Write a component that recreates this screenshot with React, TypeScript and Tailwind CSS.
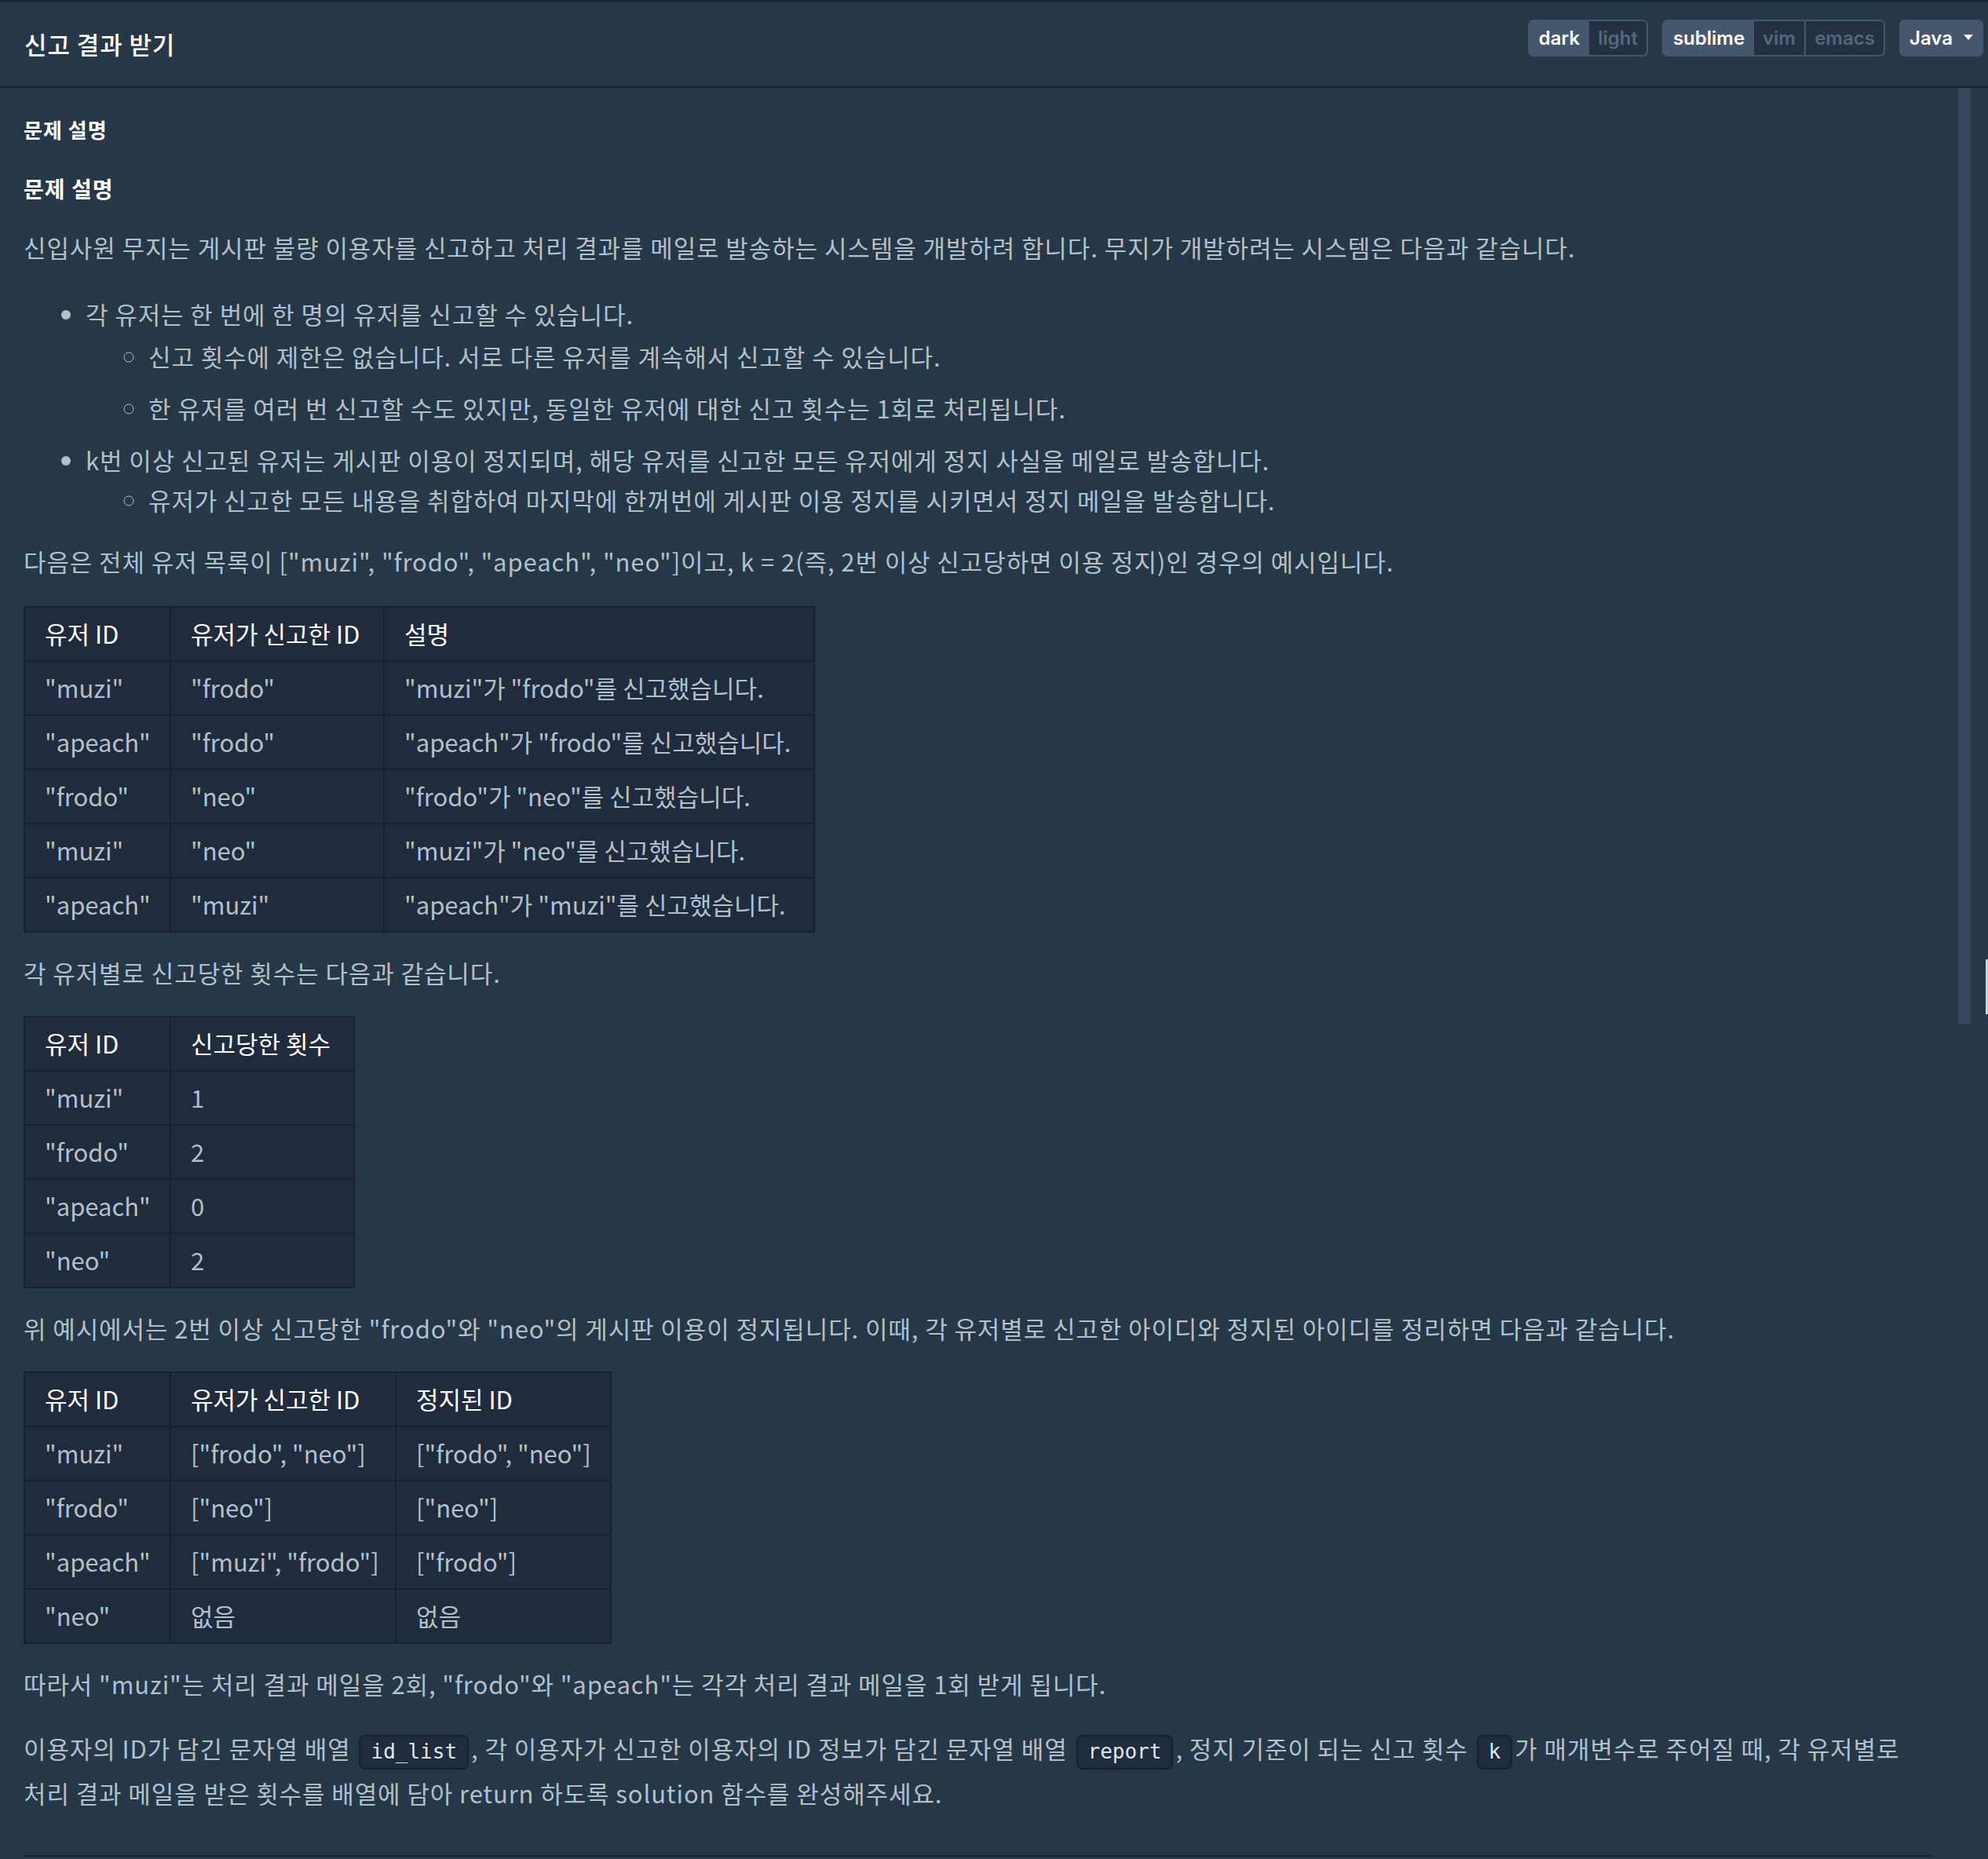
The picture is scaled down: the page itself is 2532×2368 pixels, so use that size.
import React from 'react';

const body = "font-['Noto_Sans_CJK_KR',sans-serif]";

type TableProps = {
  widths: string[];
  head: string[];
  rows: string[][];
  className?: string;
};

const DataTable: React.FC<TableProps> = ({ widths, head, rows, className }) => (
  <table className={`table-fixed border-collapse bg-[#202b3d] tracking-normal ${className ?? ''}`}>
    <thead>
      <tr>
        {head.map((h, i) => (
          <th
            key={i}
            className={`${widths[i]} h-[69px] border-2 border-[#172130] px-[25px] text-left font-normal text-white`}
          >
            {h}
          </th>
        ))}
      </tr>
    </thead>
    <tbody>
      {rows.map((row, r) => (
        <tr key={r}>
          {row.map((cell, c) => (
            <td key={c} className="h-[69px] border-2 border-[#172130] px-[25px] text-[#b2c0cc] whitespace-nowrap">
              {cell}
            </td>
          ))}
        </tr>
      ))}
    </tbody>
  </table>
);

const Code: React.FC<{ children: React.ReactNode }> = ({ children }) => (
  <code className="mx-[3px] inline-flex h-[44px] items-center rounded-[8px] border-2 border-[#172130] bg-[#202b3d] px-[13px] align-middle font-['DejaVu_Sans_Mono',monospace] text-[26px] tracking-normal text-[#dfe6ed]">
    {children}
  </code>
);

const Segment: React.FC<{ label: string; active?: boolean; className?: string }> = ({ label, active, className }) => (
  <div
    className={`flex h-full items-center justify-center ${
      active ? 'bg-[#44576c] text-white' : 'bg-[#233142] text-[#56687a]'
    } ${className ?? ''}`}
  >
    {label}
  </div>
);

const App: React.FC = () => {
  return (
    <div className={`relative h-[2368px] w-[2532px] overflow-hidden bg-[#263747] ${body}`}>
      {/* Header */}
      <div className="flex h-[112px] justify-between border-t-2 border-b-2 border-[#172130] pl-[31px] pr-[6px]">
        <h1 className="self-center text-[31px] font-medium tracking-[0.9px] text-white">신고 결과 받기</h1>
        <div className="mt-[23px] flex items-start gap-[18px] font-['Inter',sans-serif] text-[24px] font-semibold">
          <div className="flex h-[47px] overflow-hidden rounded-[7px] border-2 border-[#44576c]">
            <Segment label="dark" active className="w-[76px]" />
            <Segment label="light" className="w-[73px]" />
          </div>
          <div className="flex h-[47px] overflow-hidden rounded-[7px] border-2 border-[#44576c]">
            <Segment label="sublime" active className="w-[115px]" />
            <Segment label="vim" className="w-[64px]" />
            <Segment label="emacs" className="w-[101px] border-l-2 border-[#44576c]" />
          </div>
          <button className="flex h-[47px] w-[107px] items-center gap-[14px] rounded-[7px] bg-[#44576c] pl-[13px] text-white">
            Java
            <svg width="12" height="7" viewBox="0 0 12 7" className="mt-[-2px]">
              <path d="M0 0h12L6 7z" fill="currentColor" />
            </svg>
          </button>
        </div>
      </div>

      {/* Scrollbar thumb */}
      <div className="absolute left-[2494px] top-[112px] h-[1192px] w-[16px] bg-[#37475d]" />
      <div className="absolute right-0 top-[1222px] h-[70px] w-[3px] bg-[#c9d3dc]" />

      {/* Content */}
      <div className="w-[2461px] pl-[30px] text-[31px] tracking-[0.9px] text-[#b2c0cc] break-keep">
        <h4 className="mt-[33px] text-[26px] font-bold leading-[40px] tracking-[1px] text-white">문제 설명</h4>
        <h5 className="mt-[35px] text-[28px] font-bold leading-[40px] tracking-[1px] text-white">문제 설명</h5>
        <p className="mt-[28px] leading-[54px]">
          신입사원 무지는 게시판 불량 이용자를 신고하고 처리 결과를 메일로 발송하는 시스템을 개발하려 합니다. 무지가 개발하려는 시스템은 다음과 같습니다.
        </p>

        <ul className="mt-[31px] list-disc pl-[79px] leading-[54px]">
          <li>
            각 유저는 한 번에 한 명의 유저를 신고할 수 있습니다.
            <ul className="list-[circle] pl-[80px]">
              <li>신고 횟수에 제한은 없습니다. 서로 다른 유저를 계속해서 신고할 수 있습니다.</li>
              <li className="mt-[12px]">한 유저를 여러 번 신고할 수도 있지만, 동일한 유저에 대한 신고 횟수는 1회로 처리됩니다.</li>
            </ul>
          </li>
          <li className="mt-[12px]">
            k번 이상 신고된 유저는 게시판 이용이 정지되며, 해당 유저를 신고한 모든 유저에게 정지 사실을 메일로 발송합니다.
            <ul className="mt-[-3px] list-[circle] pl-[80px]">
              <li>유저가 신고한 모든 내용을 취합하여 마지막에 한꺼번에 게시판 이용 정지를 시키면서 정지 메일을 발송합니다.</li>
            </ul>
          </li>
        </ul>

        <p className="mt-[24px] leading-[54px]">
          다음은 전체 유저 목록이 ["muzi", "frodo", "apeach", "neo"]이고, k = 2(즉, 2번 이상 신고당하면 이용 정지)인 경우의 예시입니다.
        </p>

        <DataTable
          className="mt-[30px] w-[1006px]"
          widths={['w-[186px]', 'w-[272px]', 'w-[548px]']}
          head={['유저 ID', '유저가 신고한 ID', '설명']}
          rows={[
            ['"muzi"', '"frodo"', '"muzi"가 "frodo"를 신고했습니다.'],
            ['"apeach"', '"frodo"', '"apeach"가 "frodo"를 신고했습니다.'],
            ['"frodo"', '"neo"', '"frodo"가 "neo"를 신고했습니다.'],
            ['"muzi"', '"neo"', '"muzi"가 "neo"를 신고했습니다.'],
            ['"apeach"', '"muzi"', '"apeach"가 "muzi"를 신고했습니다.'],
          ]}
        />

        <p className="mt-[24px] leading-[54px]">각 유저별로 신고당한 횟수는 다음과 같습니다.</p>

        <DataTable
          className="mt-[28px] w-[420px]"
          widths={['w-[186px]', 'w-[234px]']}
          head={['유저 ID', '신고당한 횟수']}
          rows={[
            ['"muzi"', '1'],
            ['"frodo"', '2'],
            ['"apeach"', '0'],
            ['"neo"', '2'],
          ]}
        />

        <p className="mt-[24px] leading-[54px]">
          위 예시에서는 2번 이상 신고당한 "frodo"와 "neo"의 게시판 이용이 정지됩니다. 이때, 각 유저별로 신고한 아이디와 정지된 아이디를 정리하면 다음과 같습니다.
        </p>

        <DataTable
          className="mt-[28px] w-[747px]"
          widths={['w-[186px]', 'w-[287px]', 'w-[274px]']}
          head={['유저 ID', '유저가 신고한 ID', '정지된 ID']}
          rows={[
            ['"muzi"', '["frodo", "neo"]', '["frodo", "neo"]'],
            ['"frodo"', '["neo"]', '["neo"]'],
            ['"apeach"', '["muzi", "frodo"]', '["frodo"]'],
            ['"neo"', '없음', '없음'],
          ]}
        />

        <p className="mt-[24px] leading-[54px]">
          따라서 "muzi"는 처리 결과 메일을 2회, "frodo"와 "apeach"는 각각 처리 결과 메일을 1회 받게 됩니다.
        </p>

        <p className="mt-[26px] leading-[57px]">
          이용자의 ID가 담긴 문자열 배열 <Code>id_list</Code>, 각 이용자가 신고한 이용자의 ID 정보가 담긴 문자열 배열{' '}
          <Code>report</Code>, 정지 기준이 되는 신고 횟수 <Code>k</Code>가 매개변수로 주어질 때, 각 유저별로
          <br />
          처리 결과 메일을 받은 횟수를 배열에 담아 return 하도록 solution 함수를 완성해주세요.
        </p>

        <hr className="mt-[51px] border-t-2 border-[#172130]" />
      </div>
    </div>
  );
};

export default App;
